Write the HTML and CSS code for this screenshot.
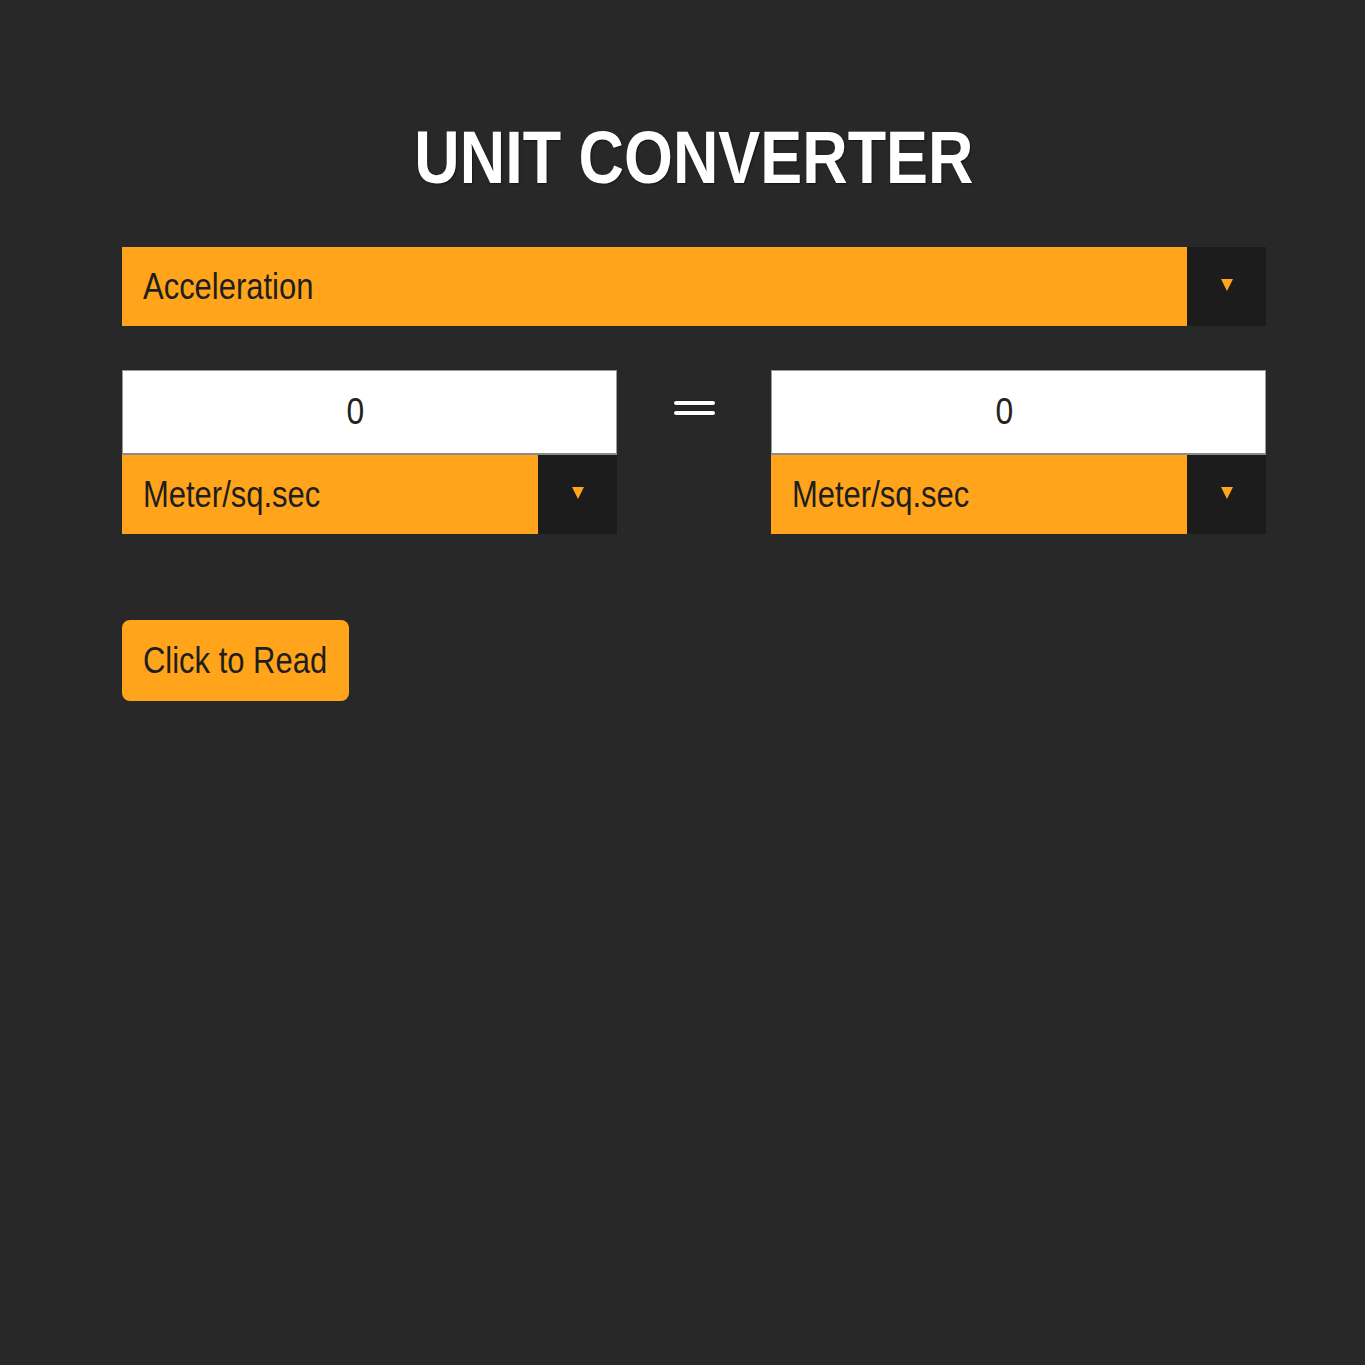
FILE: index.html
```html
<!DOCTYPE html>
<html>
<head>
<meta charset="utf-8">
<link rel="stylesheet" href="styles.css">
</head>
<body>
<main class="app">
  <h1 class="title"><span class="squeeze">UNIT CONVERTER</span></h1>
  <div class="select select-wide">
    <span class="select-label"><span class="squeeze-left">Acceleration</span></span>
    <span class="select-arrow"><span class="tri"></span></span>
  </div>
  <div class="convert-row">
    <div class="side">
      <div class="num-input"><span class="squeeze">0</span></div>
      <div class="select">
        <span class="select-label"><span class="squeeze-left">Meter/sq.sec</span></span>
        <span class="select-arrow"><span class="tri"></span></span>
      </div>
    </div>
    <div class="equals"><span class="bar"></span><span class="bar"></span></div>
    <div class="side">
      <div class="num-input"><span class="squeeze">0</span></div>
      <div class="select">
        <span class="select-label"><span class="squeeze-left">Meter/sq.sec</span></span>
        <span class="select-arrow"><span class="tri"></span></span>
      </div>
    </div>
  </div>
  <button class="read-btn"><span class="squeeze">Click to Read</span></button>
</main>
</body>
</html>
```
FILE: styles.css
```css
html, body {
  margin: 0;
  padding: 0;
  background: #282828;
  height: 100%;
}
.app {
  width: 1144px;
  margin-left: 122px;
  padding-top: 121px;
  font-family: "Liberation Sans", Arial, sans-serif;
}
.squeeze {
  display: inline-block;
  transform: scaleX(0.86);
  transform-origin: center;
  white-space: nowrap;
}
.squeeze-left {
  display: inline-block;
  transform: scaleX(0.86);
  transform-origin: left center;
  white-space: nowrap;
}
.title {
  margin: 0;
  font-size: 74px;
  line-height: 74px;
  font-weight: bold;
  color: #ffffff;
  text-align: center;
  text-shadow: 1px 1px 2px rgba(0,0,0,0.5);
}
.title .squeeze {
  transform: scaleX(0.85);
}
.select {
  display: flex;
  height: 79px;
  background: #ffa41b;
}
.select-wide {
  margin-top: 52px;
}
.select-label {
  flex: 1;
  display: flex;
  align-items: center;
  padding-left: 21px;
  font-size: 36px;
  color: #1e1e1e;
}
.select-arrow {
  width: 79px;
  background: #1c1c1c;
  display: flex;
  align-items: center;
  justify-content: center;
}
.tri {
  width: 0;
  height: 0;
  border-left: 6px solid transparent;
  border-right: 6px solid transparent;
  border-top: 12px solid #ffa41b;
  margin-top: -4px;
}
.convert-row {
  display: flex;
  margin-top: 44px;
}
.side {
  width: 495px;
  display: flex;
  flex-direction: column;
}
.num-input {
  height: 82px;
  background: #ffffff;
  border: 1px solid #9a9a9a;
  border-bottom: 2px solid #8a8a8a;
  display: flex;
  align-items: center;
  justify-content: center;
  padding-right: 28px;
  font-size: 37px;
  color: #222;
}
.equals {
  flex: 1;
  display: flex;
  flex-direction: column;
  align-items: center;
  padding-top: 31px;
  gap: 6px;
}
.bar {
  width: 41px;
  height: 4px;
  background: #ffffff;
  border-radius: 2px;
  box-shadow: 0 0 2px rgba(0,0,0,0.6);
}
.read-btn {
  display: block;
  margin-top: 86px;
  width: 227px;
  height: 81px;
  border: none;
  border-radius: 8px;
  background: #ffa41b;
  font-family: "Liberation Sans", Arial, sans-serif;
  font-size: 36px;
  color: #1e1e1e;
  padding: 0;
  text-align: center;
}
```
